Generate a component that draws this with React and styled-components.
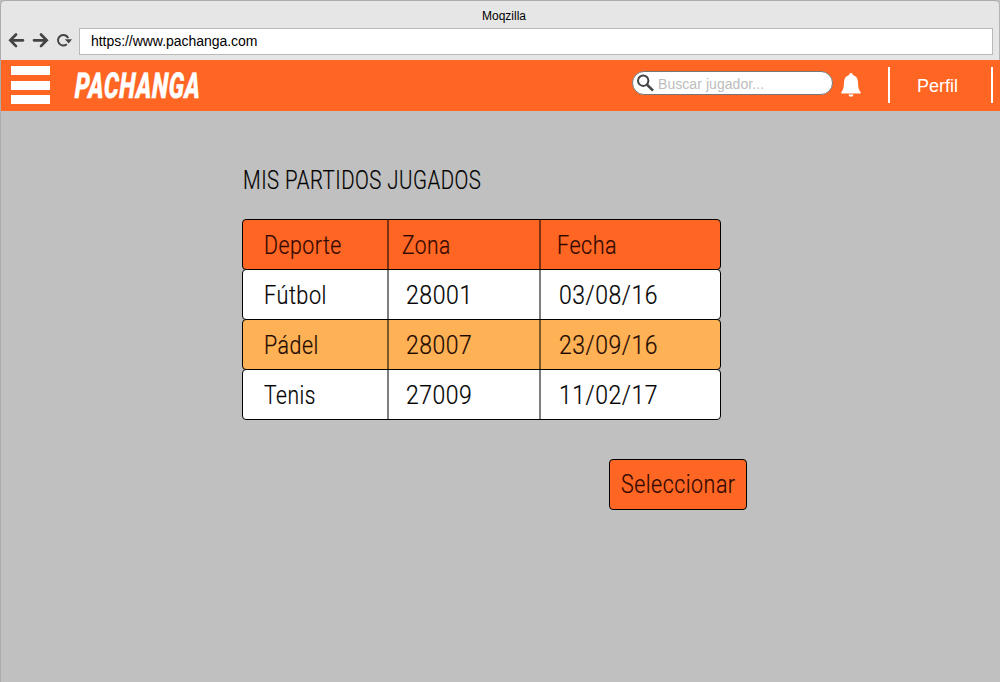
import React from "react";
import styled, { createGlobalStyle } from "styled-components";

const GlobalStyle = createGlobalStyle`
  *, *::before, *::after { box-sizing: border-box; }
  body { margin: 0; background: #c0c0c0; font-family: "Liberation Sans", Arial, sans-serif; }
`;

const Window = styled.div`
  width: 1000px;
  height: 682px;
  overflow: hidden;
  background: #c0c0c0;
  border: 1px solid #acacac;
  border-width: 1px 0 0 1px;
  border-radius: 5px 5px 0 0;
`;

const Chrome = styled.header`
  height: 59px;
  background: #e6e6e6;
  border-right: 1px solid #b4b4b4;
  border-radius: 4px 4px 0 0;
`;

const WindowTitle = styled.div`
  height: 26px;
  padding: 7px 0 0 8px;
  font-size: 12px;
  line-height: 16px;
  text-align: center;
  color: #000;
`;

const AddressRow = styled.div`
  display: flex;
  align-items: center;
  height: 28px;
  padding: 0 6px 0 7px;
`;

const NavIcons = styled.svg`
  flex: none;
  width: 71px;
  height: 28px;
`;

const Address = styled.div`
  flex: 1;
  height: 27px;
  padding-left: 11px;
  background: #fff;
  border: 1px solid #b9b9b9;
  font-size: 14px;
  letter-spacing: -0.04px;
  line-height: 24px;
  color: #000;
`;

const AppBar = styled.nav`
  display: flex;
  height: 51px;
  margin-left: -1px;
  padding-left: 11px;
  background: #ff6624;
  color: #fff;
`;

const Burger = styled.div`
  display: flex;
  flex-direction: column;
  justify-content: space-between;
  width: 39px;
  height: 38px;
  margin-top: 6px;
`;

const BurgerBar = styled.span`
  height: 9px;
  background: #fff;
`;

const Brand = styled.div`
  width: 582px;
  padding: 4px 0 0 25px;
`;

const BrandText = styled.span`
  display: inline-block;
  font: italic 900 36px/45px Roboto, sans-serif;
  letter-spacing: 0.8px;
  -webkit-text-stroke: 0.3px #fff;
  transform-origin: left center;
  transform: scaleX(0.65) skewX(-3deg);
`;

const Search = styled.label`
  display: flex;
  align-items: center;
  width: 201px;
  height: 24px;
  margin-top: 11px;
  padding-left: 3px;
  border: 1px solid #777;
  border-radius: 12px;
  background: #fff;
  color: #bcbcbc;
  font-size: 14px;
  line-height: 22px;
`;

const SearchIcon = styled.svg`
  width: 20px;
  height: 20px;
  margin-right: 2px;
`;

const SearchHint = styled.span`
  padding-top: 2px;
  letter-spacing: 0.06px;
`;

const Bell = styled.svg`
  width: 22px;
  height: 26px;
  margin: 12px 26px 0 7px;
`;

const Divider = styled.span`
  width: 2px;
  height: 36px;
  margin-top: 7px;
  background: #fff;
`;

const Profile = styled.div`
  width: 101px;
  padding: 16px 0 0 27px;
  font-size: 18px;
  line-height: 21px;
`;

const Main = styled.main`
  padding: 50px 0 0 241px;
`;

const Narrow = styled.span`
  display: inline-block;
  white-space: nowrap;
  font-family: Roboto, sans-serif;
  font-weight: 300;
  font-size: 25.5px;
  letter-spacing: 0.6px;
  -webkit-text-stroke: 0.2px currentColor;
  transform-origin: left center;
  transform: scaleX(${(p) => p.$scale});
`;

const Heading = styled.h1`
  height: 58px;
  margin: 0;
  padding-left: 1px;
  font-size: 25px;
  font-weight: 300;
  line-height: 38px;
`;

const Table = styled.div`
  width: 479px;
`;

const Row = styled.div`
  display: flex;
  height: 51px;
  margin-bottom: -1px;
  border: 1px solid #000;
  border-radius: 4px;
  background: ${(p) => p.$fill};
  color: ${(p) => p.$ink};
`;

const Cell = styled.div`
  width: ${(p) => p.$width}px;
  padding-left: ${(p) => p.$inset}px;
  line-height: 50px;
  border-right: ${(p) => (p.$last ? 0 : "2px solid rgba(0, 0, 0, 0.5)")};
`;

const SelectButton = styled.button`
  display: block;
  width: 138px;
  height: 51px;
  margin: 40px 0 0 367px;
  padding: 0 0 0 11px;
  border: 1px solid #000;
  border-radius: 4px;
  background: #ff6624;
  color: #300800;
  text-align: left;
  line-height: 49px;
`;

const rows = [
  { fill: "#ff6624", ink: "#300800", head: true, cells: [["Deporte", 0.835], ["Zona", 0.82], ["Fecha", 0.845]] },
  { fill: "#fff", ink: "#000", cells: [["Fútbol", 0.85], ["28001", 0.905], ["03/08/16", 0.9]] },
  { fill: "#ffb155", ink: "#1c0900", cells: [["Pádel", 0.84], ["28007", 0.9], ["23/09/16", 0.9]] },
  { fill: "#fff", ink: "#000", cells: [["Tenis", 0.825], ["27009", 0.9], ["11/02/17", 0.9]] },
];
const widths = [146, 152, 179];
const headInsets = [21, 13, 16];
const bodyInsets = [21, 17, 18];

export default function App() {
  return (
    <>
      <GlobalStyle />
      <Window>
        <Chrome>
          <WindowTitle>Moqzilla</WindowTitle>
          <AddressRow>
            <NavIcons viewBox="0 0 71 28" fill="none" stroke="#444" strokeWidth="2.7" strokeLinecap="round">
              <path d="M15 13.3H3M8 7.5L2.3 13.3L8 19.1" />
              <path d="M26 13.3H38M33 7.5L38.7 13.3L33 19.1" />
              <path d="M58.8 17.2A5.3 5.3 0 1 1 60.2 11.2" strokeWidth="2" strokeLinecap="butt" />
              <path d="M56.8 12.2H64L60.8 16.5Z" fill="#444" stroke="none" />
            </NavIcons>
            <Address>https://www.pachanga.com</Address>
          </AddressRow>
        </Chrome>
        <AppBar>
          <Burger>
            <BurgerBar />
            <BurgerBar />
            <BurgerBar />
          </Burger>
          <Brand>
            <BrandText>PACHANGA</BrandText>
          </Brand>
          <Search>
            <SearchIcon viewBox="0 0 20 20" fill="none" stroke="#444">
              <circle cx="7.2" cy="7.7" r="5.2" strokeWidth="2" />
              <path d="M11 11.6L17 17.6" strokeWidth="2.6" />
            </SearchIcon>
            <SearchHint>Buscar jugador...</SearchHint>
          </Search>
          <Bell viewBox="0 0 22 26" fill="#fff">
            <path d="M11 1C12.2 1 12.8 1.8 12.8 3C16 3.8 17.8 6.2 18 10C18.2 15.5 18.6 17.8 20.7 20.2V21.5H1.3V20.2C3.4 17.8 3.8 15.5 4 10C4.2 6.2 6 3.8 9.2 3C9.2 1.8 9.8 1 11 1Z" />
            <path d="M8.5 22.5H13.5C13.1 24 12.4 24.7 11 24.7S8.9 24 8.5 22.5Z" />
          </Bell>
          <Divider />
          <Profile>Perfil</Profile>
          <Divider />
        </AppBar>
        <Main>
          <Heading>
            <Narrow $scale={0.8}>MIS PARTIDOS JUGADOS</Narrow>
          </Heading>
          <Table>
            {rows.map((row) => (
              <Row key={row.cells[0][0]} $fill={row.fill} $ink={row.ink}>
                {row.cells.map(([text, scale], i) => (
                  <Cell
                    key={text}
                    $width={widths[i]}
                    $inset={(row.head ? headInsets : bodyInsets)[i]}
                    $last={i === 2}
                  >
                    <Narrow $scale={scale}>{text}</Narrow>
                  </Cell>
                ))}
              </Row>
            ))}
          </Table>
          <SelectButton>
            <Narrow $scale={0.84}>Seleccionar</Narrow>
          </SelectButton>
        </Main>
      </Window>
    </>
  );
}
